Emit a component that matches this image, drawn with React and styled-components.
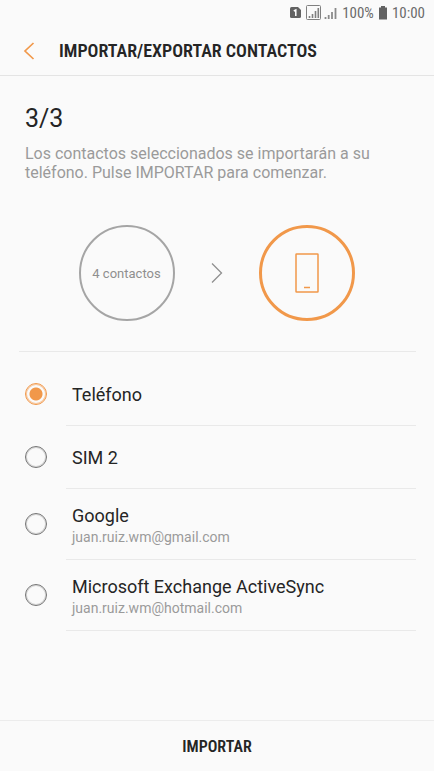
import React, { useState } from "react";
import styled, { createGlobalStyle, css } from "styled-components";

const ink = "#252525";
const muted = "#9a9a9a";
const accent = "#f1984a";
const line = "#e9e9e9";

const GlobalStyle = createGlobalStyle`
  * { box-sizing: border-box; }
  body {
    margin: 0;
    background: #fafafa;
    color: ${ink};
    font-family: Roboto, sans-serif;
  }
`;

const condensed = css`
  font-family: "Roboto Condensed", Roboto, sans-serif;
  font-weight: 600;
`;

const Screen = styled.div`
  min-height: 100vh;
  display: flex;
  flex-direction: column;
`;

const StatusBar = styled.div`
  display: flex;
  justify-content: flex-end;
  align-items: center;
  height: 26px;
  padding-right: 9px;
  gap: 5px;
  font-size: 15px;
  font-family: "Roboto Condensed", Roboto, sans-serif;
  color: #6b6b6b;
`;

const Header = styled.header`
  display: flex;
  align-items: center;
  height: 50px;
  padding-left: 19px;
  gap: 20px;
  border-bottom: 1px solid #e4e4e4;
`;

const BackButton = styled.button`
  display: flex;
  padding: 0;
  border: 0;
  background: none;
  cursor: pointer;
`;

const Title = styled.h1`
  ${condensed}
  margin: 0;
  font-size: 18px;
  line-height: 24px;
`;

const Main = styled.main`
  flex: 1;
  padding: 26px 18px 0 19px;
`;

const Intro = styled.section`
  padding: 0 6px;
`;

const Step = styled.h2`
  margin: 0 0 8px;
  font-size: 25px;
  font-weight: 400;
  line-height: 34px;
`;

const Description = styled.p`
  margin: 0;
  font-size: 16px;
  line-height: 19px;
  color: ${muted};
`;

const Transfer = styled.section`
  display: flex;
  justify-content: center;
  align-items: center;
  gap: 36px;
  padding: 43px 2px 30px 0;
  border-bottom: 1px solid ${line};
`;

const Circle = styled.div`
  display: flex;
  justify-content: center;
  align-items: center;
  width: 96px;
  height: 96px;
  border-radius: 50%;
  border: ${(p) => (p.$active ? `3px solid ${accent}` : "2px solid #a5a5a5")};
  font-size: 13px;
  color: #8f8f8f;
`;

const Options = styled.fieldset`
  margin: 0;
  padding: 11px 0 0;
  border: 0;
`;

const Option = styled.label`
  display: flex;
  align-items: center;
  gap: 19px;
  padding-left: 6px;
  cursor: pointer;
`;

const Radio = styled.input`
  appearance: none;
  flex: none;
  width: 22px;
  height: 22px;
  margin: 0 0 2px;
  border: 1px solid #757575;
  border-radius: 50%;
  box-shadow: inset 0 0 0 1px #d4d4d4;
  &:checked {
    border-color: ${accent};
    box-shadow: inset 0 0 0 1px #f8c79c;
    background: radial-gradient(circle, ${accent} 6px, transparent 7px);
  }
`;

const OptionText = styled.span`
  flex: 1;
  display: flex;
  flex-direction: column;
  justify-content: center;
  min-height: ${(p) => (p.$tall ? 71 : 63)}px;
  padding: 1px 0 0 6px;
  border-bottom: 1px solid ${line};
`;

const OptionName = styled.span`
  font-size: 18px;
  line-height: 24px;
`;

const OptionDetail = styled.span`
  font-size: 14px;
  line-height: 18px;
  color: ${muted};
`;

const Footer = styled.footer`
  display: flex;
  justify-content: center;
  border-top: 1px solid #ececec;
`;

const ImportButton = styled.button`
  ${condensed}
  flex: 1;
  height: 50px;
  padding: 0;
  border: 0;
  background: none;
  color: ${ink};
  font-size: 16px;
  cursor: pointer;
`;

const options = [
  { id: "phone", name: "Teléfono" },
  { id: "sim2", name: "SIM 2" },
  { id: "google", name: "Google", detail: "juan.ruiz.wm@gmail.com" },
  { id: "exchange", name: "Microsoft Exchange ActiveSync", detail: "juan.ruiz.wm@hotmail.com" },
];

function StatusIcons() {
  return (
    <>
      <svg width="48" height="16" viewBox="0 0 48 16" aria-hidden="true">
        <path d="M1 3.500Q1 2 2.500 2H9l3 3v6.500Q12 13 10.500 13h-8Q1 13 1 11.500z" fill="#626262" />
        <path d="M4.800 6l2-1v6" fill="none" stroke="#fff" strokeWidth="1.500" />
        <rect x="17.500" y=".500" width="14" height="14" rx="1" fill="none" stroke="#808080" />
        <path d="M20.500 13v-2M23.500 13V9M26.500 13V6M29.300 13V3" stroke="#808080" strokeWidth="1.600" />
        <path d="M36.500 14v-2M39.700 14v-4M43 14V7M46.500 14V3" stroke="#8a8a8a" strokeWidth="1.800" />
      </svg>
      <span>100%</span>
      <svg width="8" height="14" viewBox="0 0 8 14" aria-hidden="true">
        <path d="M2 0h4v1.500h2v12H0v-12h2z" fill="#626262" />
      </svg>
      <span>10:00</span>
    </>
  );
}

export default function App() {
  const [selected, setSelected] = useState("phone");
  return (
    <Screen>
      <GlobalStyle />
      <StatusBar>
        <StatusIcons />
      </StatusBar>
      <Header>
        <BackButton aria-label="Atrás">
          <svg width="20" height="20" viewBox="0 0 20 20" fill="none" stroke={accent} strokeWidth="1.700">
            <path d="M14.500 2L6 10l8.500 8" />
          </svg>
        </BackButton>
        <Title>IMPORTAR/EXPORTAR CONTACTOS</Title>
      </Header>
      <Main>
        <Intro>
          <Step>3/3</Step>
          <Description>
            Los contactos seleccionados se importarán a su teléfono. Pulse IMPORTAR para comenzar.
          </Description>
        </Intro>
        <Transfer>
          <Circle>4 contactos</Circle>
          <svg width="12" height="20" viewBox="0 0 12 20" fill="none" stroke="#8f8f8f" strokeWidth="1.300" aria-hidden="true">
            <path d="M1 .500L10.500 10 1 19.500" />
          </svg>
          <Circle $active>
            <svg width="24" height="40" viewBox="0 0 24 40" fill="none" stroke={accent} strokeWidth="1.500" aria-hidden="true">
              <rect x="1" y="1" width="22" height="38" rx=".500" />
              <path d="M9 34.500h6" />
            </svg>
          </Circle>
        </Transfer>
        <Options aria-label="Destino">
          {options.map((o) => (
            <Option key={o.id}>
              <Radio
                type="radio"
                name="destination"
                checked={selected === o.id}
                onChange={() => setSelected(o.id)}
              />
              <OptionText $tall={Boolean(o.detail)}>
                <OptionName>{o.name}</OptionName>
                {o.detail && <OptionDetail>{o.detail}</OptionDetail>}
              </OptionText>
            </Option>
          ))}
        </Options>
      </Main>
      <Footer>
        <ImportButton>IMPORTAR</ImportButton>
      </Footer>
    </Screen>
  );
}
